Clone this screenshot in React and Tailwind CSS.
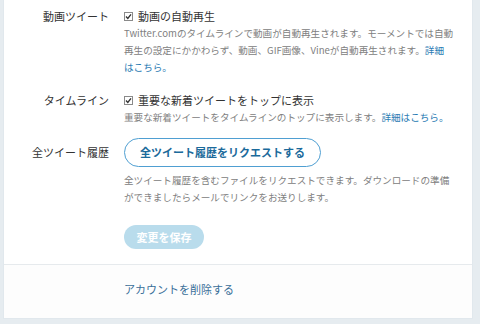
import React from 'react';

const font = { fontFamily: '"Noto Sans CJK JP", "Noto Sans", sans-serif' };

const Check = () => (
  <span className="inline-flex items-center justify-center w-[9px] h-[9px] border border-[#8a8a8a] bg-white mr-[5px] shrink-0">
    <svg width="7" height="7" viewBox="0 0 7 7">
      <path d="M1 3.6 L2.8 5.4 L6 1.4" fill="none" stroke="#333" strokeWidth="1.4" />
    </svg>
  </span>
);

const Row = ({ label, children, labelClass = 'leading-[17px]' }) => (
  <div className="flex gap-[15px]">
    <div className={`w-[105px] shrink-0 text-right text-[11px] text-[#333] ${labelClass}`}>
      {label}
    </div>
    <div className="flex-1">{children}</div>
  </div>
);

const Desc = ({ children }) => (
  <p className="text-[9.6px] leading-[17px] text-[#808080] whitespace-nowrap">{children}</p>
);

const Link = ({ children }) => <span className="text-[#2a7bb3]">{children}</span>;

const App = () => {
  return (
    <div className="w-[480px] h-[324px] bg-[#e6ecf0] pl-[3px] pr-[7px] overflow-hidden" style={font}>
      <div className="bg-white border-x border-b border-[#e1e8ed]">
        <div className="pt-[8px] pb-[15px]">
          <Row label="動画ツイート">
            <label className="flex items-center h-[17px] text-[11px] text-[#333]">
              <Check />
              動画の自動再生
            </label>
            <Desc>
              Twitter.comのタイムラインで動画が自動再生されます。モーメントでは自動
              <br />
              再生の設定にかかわらず、動画、GIF画像、Vineが自動再生されます。<Link>詳細</Link>
              <br />
              <Link>はこちら。</Link>
            </Desc>
          </Row>

          <div className="mt-[16px]">
            <Row label="タイムライン">
              <label className="flex items-center h-[17px] text-[11px] text-[#333]">
                <Check />
                重要な新着ツイートをトップに表示
              </label>
              <Desc>
                重要な新着ツイートをタイムラインのトップに表示します。<Link>詳細はこちら。</Link>
              </Desc>
            </Row>
          </div>

          <div className="mt-[12px]">
            <Row label="全ツイート履歴" labelClass="leading-[29px]">
              <button className="h-[29px] px-[15px] rounded-full border border-[#4f9fd2] bg-white text-[11px] font-bold text-[#1b6a9b]">
                全ツイート履歴をリクエストする
              </button>
              <div className="mt-[5px]">
                <Desc>
                  全ツイート履歴を含むファイルをリクエストできます。ダウンロードの準備
                  <br />
                  ができましたらメールでリンクをお送りします。
                </Desc>
              </div>
              <button className="mt-[19px] h-[24px] w-[80px] rounded-full bg-[#b9dcec] text-[11px] font-bold text-white">
                変更を保存
              </button>
            </Row>
          </div>
        </div>

        <div className="border-t border-[#e6eaed] bg-[#fdfdfd] h-[54px] pl-[120px] pt-[15px]">
          <div className="text-[11px] leading-[18px] text-[#3a6f99]">アカウントを削除する</div>
        </div>
      </div>
    </div>
  );
};

export default App;
